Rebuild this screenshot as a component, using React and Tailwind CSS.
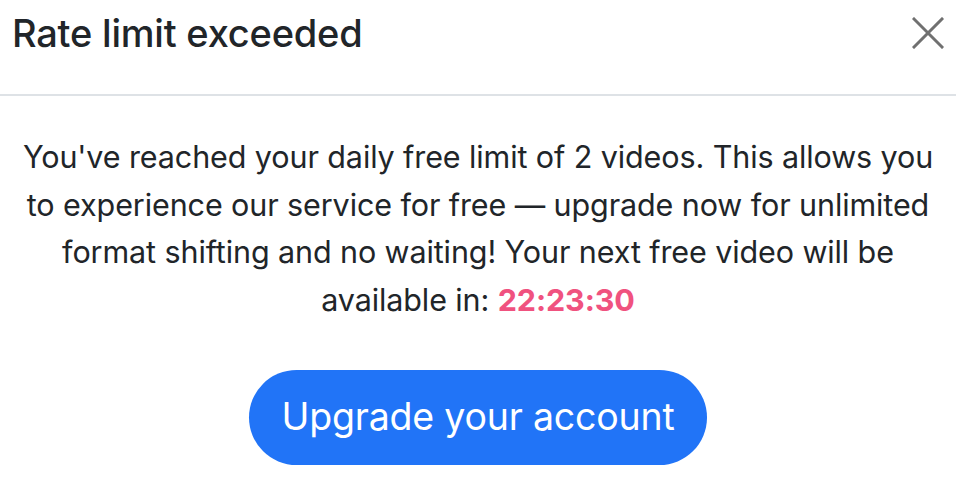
import React from 'react';

const CloseIcon = () => (
    <svg width="32" height="32" viewBox="0 0 32 32" fill="none" stroke="#707070" strokeWidth="3" strokeLinecap="square">
        <path d="M2 2L30 30M30 2L2 30" />
    </svg>
);

const App = () => {
    return (
        <div className="w-[956px] h-[480px] bg-white overflow-hidden text-[#212529]" style={{ fontFamily: 'Inter, "Noto Sans", sans-serif' }}>
            <div className="h-[96px] flex items-start justify-between pl-[12px] pr-[12px] border-b-2 border-[#dee2e6]">
                <h5 className="text-[38px] leading-[48px] mt-[9px] font-medium tracking-[-0.2px]">Rate limit exceeded</h5>
                <button className="mt-[17px]">
                    <CloseIcon />
                </button>
            </div>

            <div className="px-[18px] pt-[37px] flex flex-col items-center">
                <p className="text-[30.5px] leading-[47.5px] text-center tracking-[-0.1px]">
                    You've reached your daily free limit of 2 videos. This allows you to experience our service for free — upgrade now for unlimited format shifting and no waiting! Your next free video will be available in:{' '}
                    <span className="font-bold text-[#f0527f]">22:23:30</span>
                </p>

                <button className="mt-[47px] w-[458px] h-[95px] rounded-full bg-[#2174f7] text-white text-[37.5px] tracking-[-0.2px]">
                    Upgrade your account
                </button>
            </div>
        </div>
    );
};

export default App;
